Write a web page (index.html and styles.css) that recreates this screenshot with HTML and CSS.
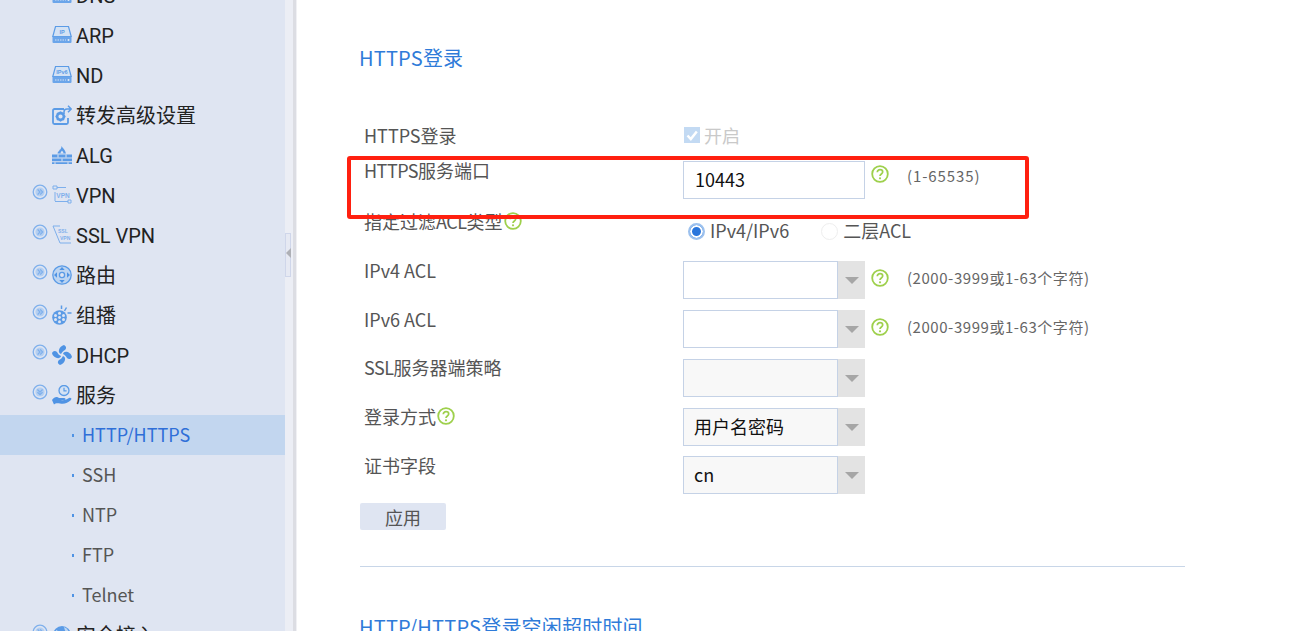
FILE: index.html
```html
<!DOCTYPE html>
<html lang="zh-CN">
<head>
<meta charset="utf-8">
<title>HTTPS登录</title>
<link rel="stylesheet" href="styles.css">
</head>
<body>
<svg class="defs" width="0" height="0" aria-hidden="true">
  <symbol id="exp-r" viewBox="0 0 16 16"><circle cx="8" cy="8" r="6.800" fill="none" stroke="#7fb0ec" stroke-width="1.300"/><circle cx="8" cy="8" r="4.600" fill="#b4cff1"/><path d="M5.600 5.400 8 8l-2.400 2.600M8.200 5.400 10.600 8l-2.400 2.600" fill="none" stroke="#7fb0ec" stroke-width="1.300"/></symbol>
  <symbol id="exp-d" viewBox="0 0 16 16"><circle cx="8" cy="8" r="6.800" fill="none" stroke="#7fb0ec" stroke-width="1.300"/><circle cx="8" cy="8" r="4.600" fill="#b4cff1"/><path d="M5.400 5.600 8 8l2.600-2.400M5.400 8.200 8 10.600l2.600-2.400" fill="none" stroke="#7fb0ec" stroke-width="1.300"/></symbol>
  <symbol id="drive" viewBox="0 0 20 20"><path d="M3.500 1.500h13l2.700 10H.8z" fill="#d4e2f4" stroke="#5b9be6" stroke-width="1.200"/><path d="M.5 11.500h19v5.500a1 1 0 0 1-1 1H1.500a1 1 0 0 1-1-1z" fill="#6ba5ea"/><path d="M3 15h11" stroke="#d4e2f4" stroke-width="1.200" stroke-dasharray="1.500 1"/><circle cx="16.500" cy="15" r="1" fill="#e3ecf7"/></symbol>
  <symbol id="adv" viewBox="0 0 20 20"><path d="M12 4H2.500A1.500 1.500 0 0 0 1 5.500v12A1.500 1.500 0 0 0 2.500 19h12a1.500 1.500 0 0 0 1.500-1.500V13" fill="none" stroke="#5b9be6" stroke-width="1.800"/><path d="M12 9V7A3 3 0 0 1 15 4h4M16 .8l3.300 3.200-3.300 3.200" fill="none" stroke="#5b9be6" stroke-width="1.500"/><circle cx="8.500" cy="11.500" r="3.400" fill="#dfe5f2" stroke="#5b9be6" stroke-width="2.600"/><path d="M8.500 6.500v2M8.500 14.500v2M3.500 11.500h2M11.500 11.500h2M5 8l1.400 1.400M10.600 13.600 12 15M12 8l-1.400 1.400M6.400 13.600 5 15" stroke="#5b9be6" stroke-width="1.500"/></symbol>
  <symbol id="alg" viewBox="0 0 20 20"><path d="M9.500 1c1 2 3.800 3.800 4.500 7.500H5.500C6 6 7.500 6.500 7.500 4.800 8.500 5 9.500 3 9.500 1z" fill="#5b9be6"/><path d="M8.500 8.500c0-1.500 1-2 1.500-3 .5 1 1.500 1.500 1.500 3z" fill="#dfe5f2"/><path d="M0 9.500h20v3H0zM0 13.500h20v2.800H0zM0 17.200h20V19H0z" fill="#5b9be6"/><path d="M6 9.500v3M14 9.500v3M10 13.500v2.800M3 17.200V19M16 17.200V19" stroke="#dfe5f2"/></symbol>
  <symbol id="route" viewBox="0 0 20 20"><circle cx="10" cy="10" r="9.200" fill="#bcd4f1" stroke="#5b9be6" stroke-width="1.300"/><circle cx="10" cy="10" r="2.600" fill="#dfe5f2" stroke="#5b9be6" stroke-width="1.300"/><path d="M10 2 12.700 5H7.300zM10 18l-2.700-3h5.400zM2 10l3-2.700v5.400zM18 10l-3 2.700V7.300z" fill="#4f93e4"/></symbol>
  <symbol id="mcast" viewBox="0 0 20 20"><circle cx="7.500" cy="12.500" r="7.300" fill="#5b9be6"/><g fill="#dfe5f2"><circle cx="7.500" cy="12.500" r="1.400"/><circle cx="7.500" cy="8.300" r="1.500"/><circle cx="7.500" cy="16.700" r="1.500"/><circle cx="3.500" cy="10.500" r="1.500"/><circle cx="11.500" cy="10.500" r="1.500"/><circle cx="3.500" cy="14.500" r="1.500"/><circle cx="11.500" cy="14.500" r="1.500"/></g><path d="M9.500 .5v3.500M14.500 2.500l-2 3.500M19.500 8h-4" stroke="#5b9be6" stroke-width="1.500"/></symbol>
  <symbol id="fan" viewBox="0 0 20 20"><g fill="#4f93e4"><path d="M9 9C5 8 7 1 12 0c2 1 3 3 1 5-2 1-3 2-4 4z"/><path d="M11 9c1-4 8-2 9 3-1 2-3 3-5 1-1-2-2-3-4-4z"/><path d="M11 11c4 1 2 8-3 9-2-1-3-3-1-5 2-1 3-2 4-4z"/><path d="M9 11c-1 4-8 2-9-3 1-2 3-3 5-1 1 2 2 3 4 4z"/></g></symbol>
  <symbol id="svc" viewBox="0 0 20 20"><circle cx="12" cy="5.500" r="5" fill="#d4e2f4" stroke="#5b9be6" stroke-width="1.300"/><path d="M12 2.800v3h2.600" fill="none" stroke="#5b9be6" stroke-width="1.200"/><path d="M0 15c2-3 5-4 7-2h5c2 0 2 2 0 2H9c3 1 6-1 8-2 2-.5 3 .5 2 2-3 3-7 4.500-11 3.500-3-.5-5 0-6 1z" fill="#4f93e4"/></symbol>
  <symbol id="globe" viewBox="0 0 20 20"><circle cx="10" cy="10" r="9" fill="#5b9be6"/><path d="M4 5c3 1 3 3 6 3 1 2-2 4-3 3-2-1-3-3-3-6zM12 2c3 1 5 4 5 7-3 0-4-3-5-7z" fill="#bcd6f4"/></symbol>
  <symbol id="help" viewBox="0 0 18 18"><circle cx="9" cy="9" r="7.800" fill="#fff" stroke="#9ed04c" stroke-width="1.800"/><path d="M6.300 7.200c0-1.700 1.200-2.500 2.700-2.500s2.700.8 2.700 2.300c0 2-2.700 1.900-2.700 4" fill="none" stroke="#9ed04c" stroke-width="1.700"/><circle cx="9" cy="13.300" r="1.100" fill="#9ed04c"/></symbol>
</svg>

<div class="app">
  <aside class="sidebar">
    <ul class="menu">
      <li class="item"><span class="exp"></span><svg class="ico"><use href="#drive"/></svg><span class="name">DNS</span></li>
      <li class="item"><span class="exp"></span><svg class="ico" viewBox="0 0 20 20"><use href="#drive"/><text class="ico-text" x="10" y="9" text-anchor="middle">IP</text></svg><span class="name">ARP</span></li>
      <li class="item"><span class="exp"></span><svg class="ico" viewBox="0 0 20 20"><use href="#drive"/><text class="ico-text" x="10" y="9" text-anchor="middle">IPv6</text></svg><span class="name">ND</span></li>
      <li class="item"><span class="exp"></span><svg class="ico"><use href="#adv"/></svg><span class="name">转发高级设置</span></li>
      <li class="item"><span class="exp"></span><svg class="ico"><use href="#alg"/></svg><span class="name">ALG</span></li>
      <li class="item"><svg class="exp"><use href="#exp-r"/></svg><svg class="ico" viewBox="0 0 20 20"><path class="ico-line" d="M1 1h4v3H1zM5 2.500h9M16 15h3v3h-3zM3 16.500h13M3 7v9"/><text class="ico-vpn" x="11" y="13" text-anchor="middle">VPN</text></svg><span class="name">VPN</span></li>
      <li class="item"><svg class="exp"><use href="#exp-r"/></svg><svg class="ico" viewBox="0 0 20 20"><path class="ico-line" d="M1 1h7M1 1l7 17h11"/><text class="ico-ssl" x="6" y="8">SSL</text><text class="ico-ssl" x="8" y="15">VPN</text></svg><span class="name">SSL VPN</span></li>
      <li class="item"><svg class="exp"><use href="#exp-r"/></svg><svg class="ico"><use href="#route"/></svg><span class="name">路由</span></li>
      <li class="item"><svg class="exp"><use href="#exp-r"/></svg><svg class="ico"><use href="#mcast"/></svg><span class="name">组播</span></li>
      <li class="item"><svg class="exp"><use href="#exp-r"/></svg><svg class="ico"><use href="#fan"/></svg><span class="name">DHCP</span></li>
      <li class="item"><svg class="exp"><use href="#exp-d"/></svg><svg class="ico"><use href="#svc"/></svg><span class="name">服务</span></li>
      <li class="sub active">HTTP/HTTPS</li>
      <li class="sub">SSH</li>
      <li class="sub">NTP</li>
      <li class="sub">FTP</li>
      <li class="sub">Telnet</li>
      <li class="item"><svg class="exp"><use href="#exp-r"/></svg><svg class="ico"><use href="#globe"/></svg><span class="name">安全接入</span></li>
    </ul>
  </aside>

  <div class="splitter"><div class="handle"><i class="handle-arrow"></i></div></div>

  <main class="main">
    <h2 class="title">HTTPS登录</h2>
    <div class="form">
      <div class="row row-first">
        <label class="lab">HTTPS登录</label>
        <div class="ctl check-line">
          <span class="checkbox"><svg viewBox="0 0 16 16" width="16" height="16"><path d="M3.500 8.500 6.800 12l6-7.500" fill="none" stroke="#fff" stroke-width="2.500"/></svg></span>
          <span class="muted">开启</span>
        </div>
      </div>
      <div class="row row-tall">
        <label class="lab"><span class="lat">HTTPS</span>服务端口</label>
        <div class="ctl">
          <input class="text" type="text" value="10443">
          <svg class="help help-high"><use href="#help"/></svg>
          <span class="hint hint-high">(1-65535)</span>
        </div>
      </div>
      <div class="row">
        <label class="lab">指定过滤<span class="lat">ACL</span>类型<svg class="help-inline"><use href="#help"/></svg></label>
        <div class="ctl radio-line">
          <span class="radio radio-on"></span><span class="opt">IPv4/IPv6</span>
          <span class="radio radio-off"></span><span class="opt">二层ACL</span>
        </div>
      </div>
      <div class="row">
        <label class="lab">IPv4 ACL</label>
        <div class="ctl">
          <div class="select"><span class="val"></span><span class="arrow"></span></div>
          <svg class="help"><use href="#help"/></svg>
          <span class="hint">(2000-3999或1-63个字符)</span>
        </div>
      </div>
      <div class="row">
        <label class="lab">IPv6 ACL</label>
        <div class="ctl">
          <div class="select"><span class="val"></span><span class="arrow"></span></div>
          <svg class="help"><use href="#help"/></svg>
          <span class="hint">(2000-3999或1-63个字符)</span>
        </div>
      </div>
      <div class="row">
        <label class="lab lab-up"><span class="lat">SSL</span>服务器端策略</label>
        <div class="ctl"><div class="select select-off"><span class="val"></span><span class="arrow"></span></div></div>
      </div>
      <div class="row row-48">
        <label class="lab lab-up">登录方式<svg class="help-inline"><use href="#help"/></svg></label>
        <div class="ctl"><div class="select select-off"><span class="val">用户名密码</span><span class="arrow"></span></div></div>
      </div>
      <div class="row row-47">
        <label class="lab">证书字段</label>
        <div class="ctl"><div class="select select-off"><span class="val">cn</span><span class="arrow"></span></div></div>
      </div>
      <button class="apply" type="button">应用</button>
    </div>
    <hr class="divider">
    <h2 class="title title-next">HTTP/HTTPS登录空闲超时时间</h2>
  </main>
</div>
<div class="callout"></div>
</body>
</html>
```
FILE: styles.css
```css
* { box-sizing: border-box; }
html, body { margin: 0; height: 631px; overflow: hidden; background: #fff; }
body { font-family: "Noto Sans CJK SC", "Noto Sans", sans-serif; color: #555; }
.defs { position: absolute; }
.app { display: flex; height: 631px; overflow: hidden; }

.sidebar { width: 285px; flex: none; background: #dfe5f2; overflow: hidden; }
.menu { list-style: none; margin: -25px 0 0; padding: 0; }
.item { height: 40px; display: flex; align-items: center; padding-left: 32px; font-family: Roboto, "Noto Sans CJK SC", sans-serif; font-size: 20px; color: #222; line-height: 40px; }
.name { margin-top: 2px; }
.exp { width: 16px; height: 16px; flex: none; margin-right: 4px; margin-top: -7px; }
.ico { width: 20px; height: 20px; flex: none; margin-right: 4px; }
.ico-text { font: 700 5.500px "Liberation Sans", sans-serif; fill: #5b9be6; }
.ico-vpn { font: 700 6.500px "Liberation Sans", sans-serif; fill: #7fb0ec; }
.ico-ssl { font: 700 5px "Liberation Sans", sans-serif; fill: #7fb0ec; }
.ico-line { fill: none; stroke: #7dafec; stroke-width: 1; }
.sub { height: 40px; line-height: 39px; padding-left: 82px; font-size: 18px; color: #555; position: relative; }
.sub::before { content: ""; position: absolute; left: 72px; top: 19px; width: 2px; height: 3px; background: #4f93e4; }
.sub.active { background: #c2d6ef; color: #2f6fd8; }

.splitter { width: 12px; flex: none; position: relative; background: linear-gradient(to right, #eceef5 0 8px, #dcdde3 8px 11px, #f0f0f4 11px); }
.handle { position: absolute; left: 0; top: 233px; width: 6px; height: 44px; border: 1px solid #cfd6ea; background: #e6e9f3; }
.handle-arrow { position: absolute; left: 0; top: 14px; border: 5px solid transparent; border-left-width: 0; border-right-color: #aeb0b6; }

.main { flex: 1; padding-left: 63px; overflow: hidden; }
.title { margin: 44px 0 0 -1px; font-size: 20px; font-weight: 400; line-height: 28px; letter-spacing: .2px; color: #2f7bd9; }
.title-next { margin-top: 46px; }
.form { width: 825px; margin-top: 54px; }
.row { display: grid; grid-template-columns: 323px 1fr; height: 49px; }
.row-first { height: 35px; }
.row-tall { height: 51px; }
.row-48 { height: 48px; }
.row-47 { height: 47px; }
.lab { margin-top: -1px; padding-left: 4px; font-size: 18px; line-height: 20px; color: #555; display: flex; align-items: center; height: 20px; }
.lat { letter-spacing: -.5px; }
.lab-up { margin-top: -2px; }
.ctl { display: flex; align-items: flex-start; }

.check-line { align-items: center; height: 20px; margin-top: -1px; }
.checkbox { width: 16px; height: 16px; background: #c3daf3; margin-right: 4px; margin-left: 1px; display: flex; }
.muted { font-size: 18px; line-height: 20px; color: #c9c9c9; }

.text { width: 182px; height: 38px; border: 1px solid #c5d2e6; padding: 0 11px 3px; font: 18px "Noto Sans CJK SC", sans-serif; color: #111; outline: none; background: #fff; }

.select { width: 182px; height: 38px; display: flex; }
.val { flex: 1; border: 1px solid #c5d2e6; padding-left: 10px; font-size: 18px; line-height: 35px; color: #111; background: #fff; }
.select-off .val { background: #f8f8f8; }
.arrow { width: 27px; background: #e3e3e3; position: relative; }
.arrow::after { content: ""; position: absolute; left: 7px; top: 16px; border: 7px solid transparent; border-top-width: 7px; border-bottom-width: 0; border-top-color: #a6a6a6; }

.help { width: 18px; height: 18px; margin: 8px 0 0 6px; flex: none; }
.help-high { margin-top: 4px; }
.help-inline { width: 18px; height: 18px; flex: none; margin-left: 1px; }
.hint { margin: 7px 0 0 18px; font-size: 15px; line-height: 20px; color: #666; letter-spacing: .55px; }
.hint-high { margin-top: 5px; letter-spacing: .9px; }

.radio-line { align-items: center; height: 20px; margin-top: 9px; }
.radio { width: 17px; height: 17px; border-radius: 50%; flex: none; background: #fff; }
.radio-on { margin-left: 5px; margin-right: 5px; border: 2px solid #9cc1ee; box-shadow: inset 0 0 0 2px #fff; background: #2a76dc; }
.radio-off { margin-left: 32px; margin-right: 5px; border: 1px solid #eee; }
.opt { margin-top: -2px; font-size: 18px; line-height: 20px; color: #555; }

.apply { display: block; width: 86px; height: 27px; padding: 0; border: 0; border-radius: 2px; background: #dfe5f2; font: 18px "Noto Sans CJK SC", sans-serif; color: #555; }
.divider { width: 825px; height: 1px; margin: 36px 0 0; border: 0; background: #c8d6e8; }

.callout { position: absolute; left: 347px; top: 156px; width: 682px; height: 63px; border: 4px solid #ff2010; border-radius: 3px; }
```
